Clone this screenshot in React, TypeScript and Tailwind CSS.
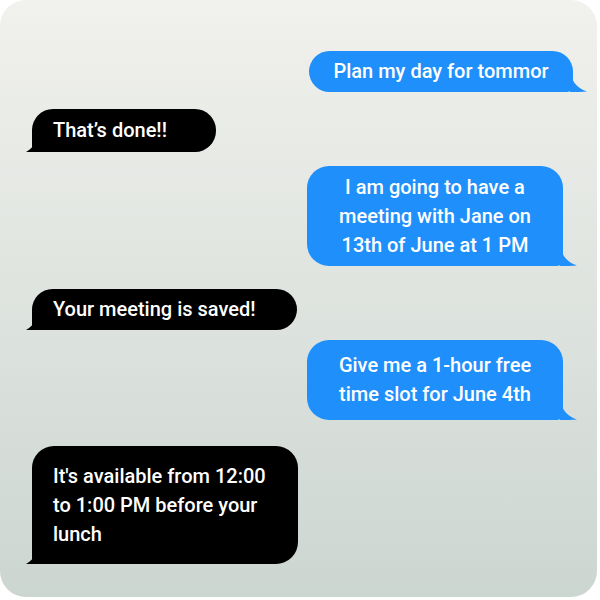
export default function App() {
  return (
    <div className="w-[600px] h-[600px] bg-white">
      <div
        className="w-[597px] h-[597px] rounded-[26px] bg-gradient-to-b from-[#f1f1ed] to-[#ccd6d1] flex flex-col pt-[51px] pl-[32px] pr-[34px] text-[20px] leading-[29px] font-medium text-white"
        style={{ fontFamily: "Roboto, 'Liberation Sans', sans-serif" }}
      >
        {/* 1 */}
        <div className="relative self-end -mr-[10px] w-[264px] rounded-[21px] rounded-br-[6px] bg-[#1f8ffb] py-[6px] text-center">
          Plan my day for tommor
          <TailRight />
        </div>

        {/* 2 */}
        <div className="relative self-start mt-[17px] w-[184px] rounded-[21px] rounded-bl-[6px] bg-black py-[7px] pl-[21px]">
          That’s done!!
          <TailLeft />
        </div>

        {/* 3 */}
        <div className="relative self-end mt-[14px] w-[256px] rounded-[22px] rounded-br-[6px] bg-[#1f8ffb] py-[6.5px] text-center">
          I am going to have a<br />
          meeting with Jane on<br />
          13th of June at 1 PM
          <TailRight />
        </div>

        {/* 4 */}
        <div className="relative self-start mt-[23px] w-[265px] rounded-[21px] rounded-bl-[6px] bg-black py-[6px] pl-[21px]">
          Your meeting is saved!
          <TailLeft />
        </div>

        {/* 5 */}
        <div className="relative self-end mt-[10px] w-[256px] rounded-[22px] rounded-br-[6px] bg-[#1f8ffb] py-[11px] text-center">
          Give me a 1-hour free<br />
          time slot for June 4th
          <TailRight />
        </div>

        {/* 6 */}
        <div className="relative self-start mt-[26px] w-[266px] rounded-[22px] rounded-bl-[6px] bg-black py-[15.5px] pl-[21px]">
          It's available from 12:00<br />
          to 1:00 PM before your<br />
          lunch
          <TailLeft />
        </div>
      </div>
    </div>
  );
}

function TailRight() {
  return (
    <svg
      className="absolute -right-[17px] bottom-0"
      width="20"
      height="22"
      viewBox="0 0 20 22"
    >
      <path d="M0 0 C1 10 6 18 17 21.5 C12 22 6 22 0 22 Z" fill="#1f8ffb" />
    </svg>
  );
}

function TailLeft() {
  return (
    <svg
      className="absolute -left-[6px] bottom-0"
      width="12"
      height="22"
      viewBox="0 0 12 22"
    >
      <path d="M12 0 C11.5 10 9 17 0 22 L12 22 Z" fill="black" />
    </svg>
  );
}
